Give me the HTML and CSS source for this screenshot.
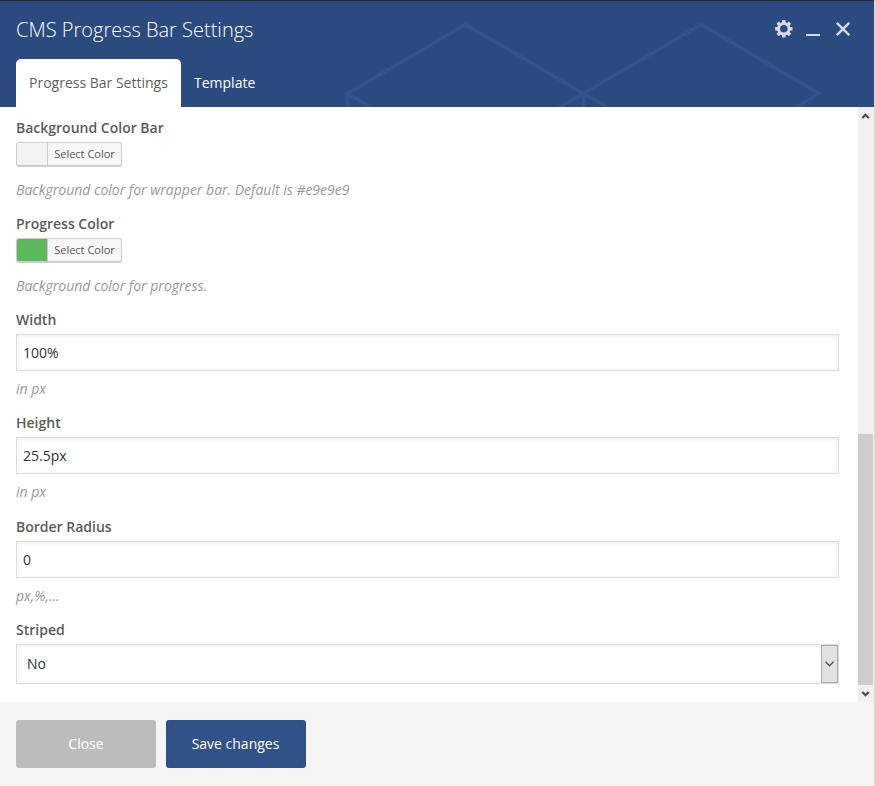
FILE: index.html
```
<!DOCTYPE html>
<html lang="en">
<head>
<meta charset="utf-8">
<title>CMS Progress Bar Settings</title>
<link rel="stylesheet" href="styles.css">
</head>
<body>
<div class="panel">
  <header class="header">
    <svg class="pattern" width="874" height="106" viewBox="0 1 874 106" fill="none" stroke="#31538a" stroke-width="3.6">
      <path d="M347.500 107V93.500L465.500 24.500L583.500 93.500V107M347.500 93.500L375 109.500M345 95L347.500 93.500M556 109.500L583.500 93.500L701 24.500L819 93.500L792 109.500M583.500 93.500L611 109.500"/>
    </svg>
    <div class="titlebar">
      <h1 class="title">CMS Progress Bar Settings</h1>
      <div class="controls">
        <svg width="18" height="18" viewBox="-8.800 -8.800 18 18" fill="none">
          <circle r="5.300" stroke="#d5dce8" stroke-width="3"/>
          <path stroke="#d5dce8" stroke-width="3.400" d="M0-8.700V-5.500M0 5.500V8.700M-8.700 0H-5.500M5.500 0H8.700M-6.150-6.150L-4-4M4 4L6.150 6.150M-6.150 6.150L-4 4M4-4L6.150-6.150"/>
        </svg>
        <svg width="14" height="18" viewBox="0 0 14 18"><path fill="#d5dce8" d="M0 14h14v2H0z"/></svg>
        <svg width="14" height="18" viewBox="0 0 14 18"><path stroke="#d5dce8" stroke-width="2.300" d="M.8 2.800L13.200 15.200M13.200 2.800L.8 15.200"/></svg>
      </div>
    </div>
    <nav class="tabs">
      <a class="tab active">Progress Bar Settings</a>
      <a class="tab">Template</a>
    </nav>
  </header>
  <main class="body">
    <div class="fields">
      <section class="field">
        <div class="label">Background Color Bar</div>
        <div class="picker"><span class="swatch"></span><span class="picker-text">Select Color</span></div>
        <p class="hint picker-hint">Background color for wrapper bar. Default is #e9e9e9</p>
      </section>
      <section class="field">
        <div class="label">Progress Color</div>
        <div class="picker"><span class="swatch green"></span><span class="picker-text">Select Color</span></div>
        <p class="hint picker-hint">Background color for progress.</p>
      </section>
      <section class="field">
        <div class="label">Width</div>
        <div class="input">100%</div>
        <p class="hint">in px</p>
      </section>
      <section class="field">
        <div class="label">Height</div>
        <div class="input">25.5px</div>
        <p class="hint">in px</p>
      </section>
      <section class="field">
        <div class="label">Border Radius</div>
        <div class="input">0</div>
        <p class="hint">px,%,...</p>
      </section>
      <section class="field">
        <div class="label">Striped</div>
        <div class="input select"><span>No</span>
          <span class="drop"><svg width="9" height="6" viewBox="0 0 9 6" fill="none" stroke="#505050" stroke-width="1.300"><path d="M.5 .8L4.500 4.800L8.500 .8"/></svg></span>
        </div>
      </section>
    </div>
    <div class="scrollbar">
      <svg width="15" height="17" viewBox="0 0 15 17" fill="none" stroke="#505050" stroke-width="2.300"><path d="M4.300 11L7.500 7.800L10.700 11"/></svg>
      <div class="thumb"></div>
      <svg width="15" height="17" viewBox="0 0 15 17" fill="none" stroke="#505050" stroke-width="2.300"><path d="M4.300 7L7.500 10.200L10.700 7"/></svg>
    </div>
  </main>
  <footer class="footer">
    <span class="button">Close</span>
    <span class="button primary">Save changes</span>
  </footer>
</div>
</body>
</html>
```
FILE: styles.css
```
* { box-sizing: border-box; }
body {
  margin: 0;
  background: #fff;
  font: 14px/20px "Open Sans", sans-serif;
  color: #333;
}
.panel {
  width: 875px;
  height: 786px;
  border-right: 1px solid #d9d9d9;
  display: flex;
  flex-direction: column;
  overflow: hidden;
}
.header {
  position: relative;
  height: 107px;
  border-top: 1px solid #23282d;
  background: #2b4b80;
  display: flex;
  flex-direction: column;
  justify-content: space-between;
}
.pattern { position: absolute; left: 0; top: 0; }
.titlebar {
  position: relative;
  display: flex;
  justify-content: space-between;
  padding: 15px 24px 0 16px;
}
.title {
  margin: 0;
  font-size: 20px;
  line-height: 28px;
  font-weight: 300;
  color: #fff;
}
.controls { display: flex; padding-top: 4px; }
.controls svg:nth-child(2) { margin: 0 16px 0 13px; }
.tabs { position: relative; display: flex; padding-left: 16px; }
.tab {
  height: 48px;
  padding: 0 13px;
  line-height: 48px;
  color: #fff;
}
.active {
  width: 165px;
  background: #fff;
  border-radius: 5px 5px 0 0;
  color: #5f5f5f;
}
.body { display: flex; height: 595px; }
.fields {
  flex: 1;
  display: grid;
  grid-template-rows: 96px 96px 103px 104px 103px 64px;
  align-content: start;
  padding: 11px 19px 0 16px;
}
.label { margin-bottom: 4px; font-weight: 600; color: #5b5b5b; }
.hint { margin: 8px 0 0; font-style: italic; color: #999; }
.picker {
  display: flex;
  width: 106px;
  height: 25px;
  border: 1px solid #ccc;
  border-bottom-width: 2px;
  border-radius: 3px;
  background: #f7f7f7;
  overflow: hidden;
}
.swatch { width: 31px; border-right: 1px solid #ccc; background: #f3f3f3; }
.swatch.green { background: #5cb85c; }
.picker-text {
  flex: 1;
  text-align: center;
  font-size: 11px;
  line-height: 22px;
  color: #555;
}
.picker-hint { margin-top: 13px; }
.input {
  height: 37px;
  padding: 0 6px;
  border: 1px solid #ddd;
  line-height: 36px;
  box-shadow: inset 0 1px 4px rgba(0, 0, 0, .07);
}
.select {
  display: flex;
  justify-content: space-between;
  height: 40px;
  padding: 0 0 0 10px;
  line-height: 38px;
}
.drop {
  width: 17px;
  display: flex;
  align-items: center;
  justify-content: center;
  border: 1px solid #adadad;
  background: #e1e1e1;
}
.scrollbar {
  width: 16px;
  padding-right: 1px;
  background: #f0f0f0;
  display: flex;
  flex-direction: column;
}
.thumb { height: 251px; margin-top: auto; background: #cdcdcd; }
.footer {
  flex: 1;
  display: flex;
  gap: 10px;
  padding: 18px 16px;
  background: #f5f5f5;
}
.button {
  width: 140px;
  height: 48px;
  border-radius: 3px;
  background: #bcbcbc;
  color: #fff;
  line-height: 48px;
  text-align: center;
}
.primary { padding-right: 1px; background: #315288; }
```
